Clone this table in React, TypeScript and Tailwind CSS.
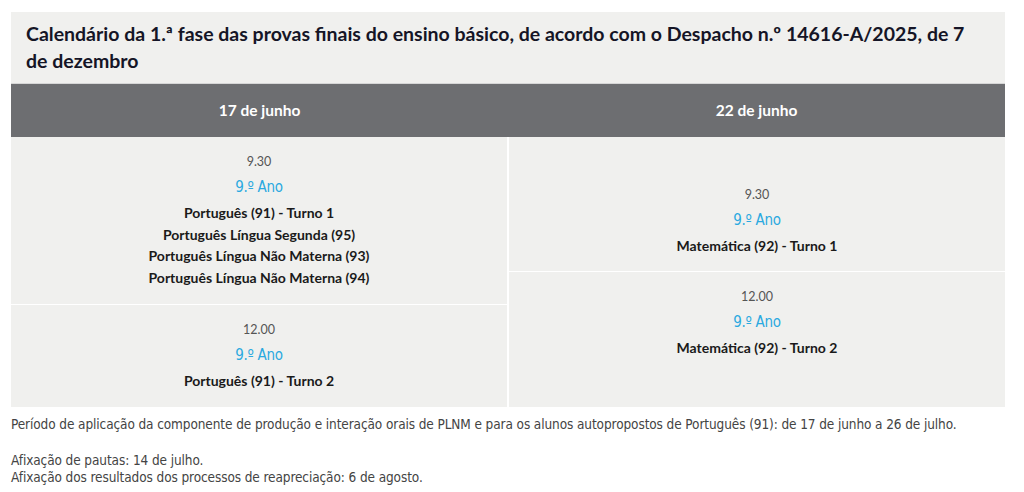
import React from 'react';

const timeCls = "text-[12.5px] leading-[20px] text-[#555]";
const anoCls = "text-[15px] leading-[30px] text-[#2aa9e0] font-['DejaVu_Sans',sans-serif] font-stretch-condensed tracking-[-0.3px]";
const subjCls = "text-[14px] leading-[21.7px] font-bold text-[#1a1a1a]";

function Slot({ time, subjects }: { time: string; subjects: string[] }) {
  return (
    <div className="flex flex-col items-center">
      <div className={timeCls}>{time}</div>
      <div className={anoCls}>9.º Ano</div>
      {subjects.map((s) => (
        <div key={s} className={subjCls}>{s}</div>
      ))}
    </div>
  );
}

export default function App() {
  return (
    <div className="w-[1024px] h-[492px] bg-white font-['Lato',sans-serif] pt-[12px]">
      {/* Tabela */}
      <div className="mx-[11px] w-[994px] bg-[#f0f0ee]">
        <h2 className="px-[15px] pt-[8px] pb-[9px] text-[19.5px] leading-[27px] font-bold text-[#151526]">
          Calendário da 1.ª fase das provas finais do ensino básico, de acordo com o Despacho n.º 14616-A/2025, de 7 de dezembro
        </h2>
        <div className="flex h-[54px] bg-[#6d6e71] border-t border-[#d6d6d6] text-white text-[15.5px] font-bold">
          <div className="flex-1 flex items-center justify-center">17 de junho</div>
          <div className="flex-1 flex items-center justify-center">22 de junho</div>
        </div>
        <div className="flex gap-[2px] bg-white">
          {/* 17 de junho */}
          <div className="w-[496px] flex flex-col gap-[1px]">
            <div className="bg-[#f0f0ee] py-[15px]">
              <Slot
                time="9.30"
                subjects={[
                  'Português (91) - Turno 1',
                  'Português Língua Segunda (95)',
                  'Português Língua Não Materna (93)',
                  'Português Língua Não Materna (94)',
                ]}
              />
            </div>
            <div className="bg-[#f0f0ee] py-[15px] h-[102px]">
              <Slot time="12.00" subjects={['Português (91) - Turno 2']} />
            </div>
          </div>
          {/* 22 de junho */}
          <div className="flex-1 flex flex-col gap-[1px]">
            <div className="flex-1 bg-[#f0f0ee] flex flex-col justify-end pb-[15px]">
              <Slot time="9.30" subjects={['Matemática (92) - Turno 1']} />
            </div>
            <div className="flex-1 bg-[#f0f0ee] pt-[15px]">
              <Slot time="12.00" subjects={['Matemática (92) - Turno 2']} />
            </div>
          </div>
        </div>
      </div>

      {/* Notas */}
      <div className="px-[11px] pt-[9px] text-[13.5px] leading-[17px] text-[#444] font-['DejaVu_Sans',sans-serif] font-stretch-condensed tracking-[-0.1px]">
        <p>
          Período de aplicação da componente de produção e interação orais de PLNM e para os alunos autopropostos de Português (91): de 17 de junho a 26 de julho.
        </p>
        <p className="mt-[19px]">Afixação de pautas: 14 de julho.</p>
        <p>Afixação dos resultados dos processos de reapreciação: 6 de agosto.</p>
      </div>
    </div>
  );
}
